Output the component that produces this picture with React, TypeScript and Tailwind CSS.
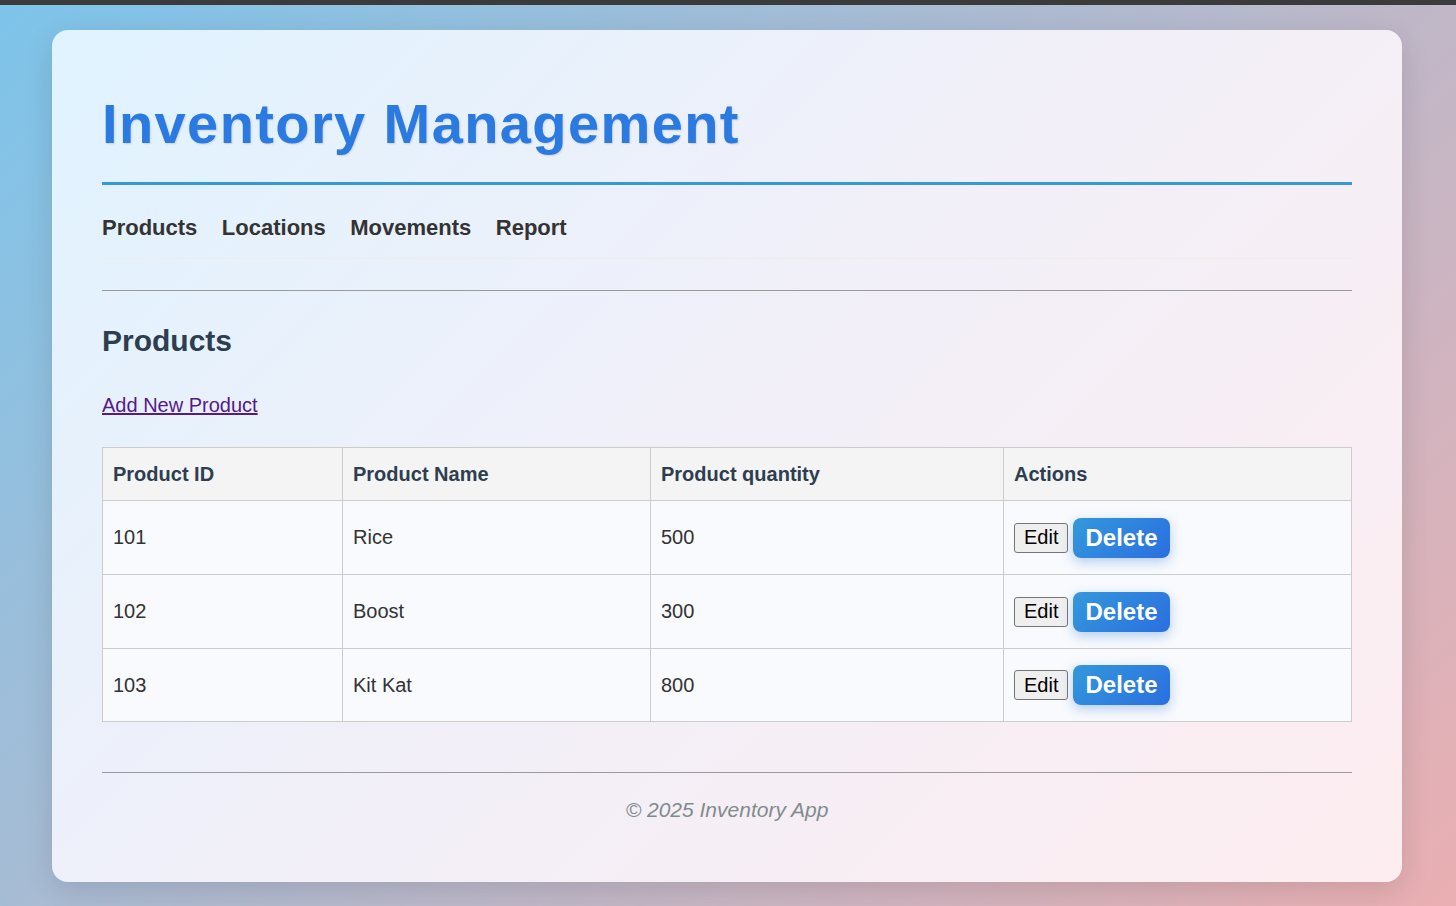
import React from 'react';

type Product = { id: number; name: string; qty: number };

const products: Product[] = [
  { id: 101, name: 'Rice', qty: 500 },
  { id: 102, name: 'Boost', qty: 300 },
  { id: 103, name: 'Kit Kat', qty: 800 },
];

const navLinks = ['Products', 'Locations', 'Movements', 'Report'];

export default function App() {
  return (
    <div className="min-h-[906px] bg-[linear-gradient(135deg,#7dc4ea_0%,#eaafb2_100%)] font-['Liberation_Sans',Arial,sans-serif]">
      {/* top strip */}
      <div className="h-[5px] bg-[#3b3b3b]" />

      {/* Card */}
      <div className="mt-[25px] ml-[52px] w-[1350px] rounded-[16px] bg-[linear-gradient(135deg,#dff3ff_0%,#f2eff8_50%,#fdedf0_100%)] px-[50px] pt-[62px] pb-[60px] shadow-[0_8px_30px_rgba(0,0,0,0.12)]">
        {/* Header */}
        <h1 className="border-b-[3px] border-[#3498db] pb-[26px] text-[56px] leading-[64px] font-bold tracking-[1.4px] text-[#2a7ae2] [text-shadow:1px_1px_2px_rgba(0,0,0,0.12)]">
          Inventory Management
        </h1>

        <nav className="mt-[30px] flex gap-[24.5px] border-b border-[#efece9] pb-[17px]">
          {navLinks.map((link) => (
            <a key={link} href="#" className="text-[22px] leading-[26px] font-bold text-[#333]">
              {link}
            </a>
          ))}
        </nav>

        <hr className="mt-[31px] border-t border-[#9a9a9a]" />

        {/* Content */}
        <main>
          <h2 className="mt-[32px] text-[30px] leading-[36px] font-bold text-[#2c3e50]">Products</h2>

          <a href="#" className="mt-[35px] block w-fit text-[20px] leading-[23px] text-[#551a8b] underline">
            Add New Product
          </a>

          <table className="mt-[30px] w-full table-fixed border-collapse border border-[#cccccc] text-[20px] leading-[23px]">
            <colgroup>
              <col className="w-[240px]" />
              <col className="w-[308px]" />
              <col className="w-[353px]" />
              <col />
            </colgroup>
            <thead>
              <tr className="bg-[#f4f4f4]">
                {['Product ID', 'Product Name', 'Product quantity', 'Actions'].map((h) => (
                  <th
                    key={h}
                    className="h-[53px] border border-[#cccccc] px-[10px] text-left font-bold text-[#2c3e50]"
                  >
                    {h}
                  </th>
                ))}
              </tr>
            </thead>
            <tbody>
              {products.map((p, i) => (
                <tr key={p.id} className="bg-[#f8fafd]">
                  <td
                    className={`${i === products.length - 1 ? 'h-[73px]' : 'h-[74px]'} border border-[#cccccc] px-[10px] text-[#333]`}
                  >
                    {p.id}
                  </td>
                  <td className="border border-[#cccccc] px-[10px] text-[#333]">{p.name}</td>
                  <td className="border border-[#cccccc] px-[10px] text-[#333]">{p.qty}</td>
                  <td className="border border-[#cccccc] px-[10px]">
                    <div className="flex items-center gap-[5px]">
                      <button className="h-[30px] rounded-[3px] border border-[#767676] bg-[#efefef] px-[9px] text-[20px] leading-[23px] text-black">
                        Edit
                      </button>
                      <button className="h-[40px] rounded-[8px] bg-[linear-gradient(135deg,#3498db,#2a6fe0)] px-[12px] text-[24px] leading-[28px] font-bold text-white shadow-[0_4px_12px_rgba(52,120,219,0.35)]">
                        Delete
                      </button>
                    </div>
                  </td>
                </tr>
              ))}
            </tbody>
          </table>
        </main>

        {/* Footer */}
        <footer>
          <hr className="mt-[50px] border-t border-[#9a9a9a]" />
          <p className="mt-[25px] text-center text-[21px] leading-[24px] text-[#7f8c8d] italic">
            © 2025 Inventory App
          </p>
        </footer>
      </div>
    </div>
  );
}
